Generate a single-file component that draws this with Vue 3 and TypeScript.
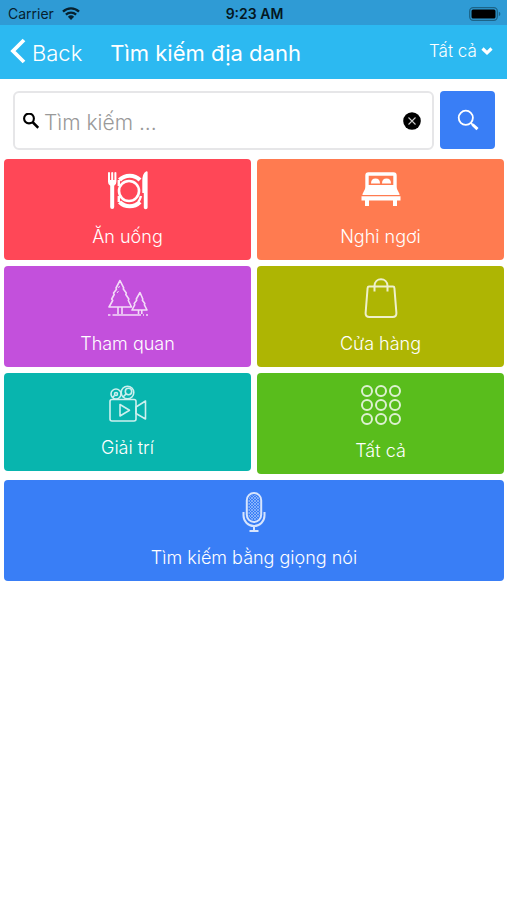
<script setup lang="ts">
import { ref } from 'vue'

interface Category {
  id: string
  label: string
  color: string
}

const categories: Category[] = [
  { id: 'food', label: 'Ăn uống', color: '#ff4757' },
  { id: 'rest', label: 'Nghỉ ngơi', color: '#ff7b50' },
  { id: 'visit', label: 'Tham quan', color: '#c350dc' },
  { id: 'shop', label: 'Cửa hàng', color: '#aeb503' },
  { id: 'fun', label: 'Giải trí', color: '#08b5ae' },
  { id: 'all', label: 'Tất cả', color: '#59bd1c' },
  { id: 'voice', label: 'Tìm kiếm bằng giọng nói', color: '#397ef6' },
]

const dots = [6, 20, 34]
const query = ref('')
const filter = ref('all')
</script>

<template>
  <div class="screen">
    <div class="status">
      <div class="carrier">
        <span>Carrier</span>
        <svg class="wifi" viewBox="0 0 18 13" aria-hidden="true">
          <path d="M1 4.6a11.5 11.5 0 0 1 16 0M3.9 7.6a7.4 7.4 0 0 1 10.2 0" fill="none" stroke="currentColor" stroke-width="2.3" />
          <path d="M9 13 5.9 9.8a4.5 4.5 0 0 1 6.2 0z" fill="currentColor" />
        </svg>
      </div>
      <span class="time">9:23 AM</span>
      <svg class="battery" viewBox="0 0 32 14" aria-hidden="true">
        <rect x=".7" y=".7" width="27.6" height="12.6" rx="3.5" fill="none" stroke="#1c6488" stroke-width="1.3" />
        <rect x="2.5" y="2.5" width="24" height="9" rx="1.5" fill="#000" />
        <path d="M29.8 4.8q1.6.6 1.6 2.2t-1.6 2.2z" fill="#1c6488" />
      </svg>
    </div>

    <header class="nav">
      <button class="back" type="button">
        <svg viewBox="0 0 16 26" aria-hidden="true">
          <path d="M14 2 3 13l11 11" fill="none" stroke="currentColor" stroke-width="3.8" />
        </svg>
        <span>Back</span>
      </button>
      <h1>Tìm kiếm địa danh</h1>
      <div class="filter">
        <select v-model="filter" aria-label="Danh mục">
          <option value="all">Tất cả</option>
        </select>
        <svg viewBox="0 0 12 8" aria-hidden="true">
          <path d="m1.5 1.5 4.5 4.3 4.5-4.3" fill="none" stroke="currentColor" stroke-width="3.2" />
        </svg>
      </div>
    </header>

    <main>
      <form class="search" @submit.prevent>
        <div class="field">
          <svg class="lens" viewBox="0 0 16 16" aria-hidden="true">
            <circle cx="6" cy="5.500" r="4.900" fill="none" stroke="#000" stroke-width="2.1" />
            <path d="m9.500 9 5.800 5.800" stroke="#000" stroke-width="2.5" />
          </svg>
          <input v-model="query" type="text" placeholder="Tìm kiếm ..." aria-label="Tìm kiếm" />
          <button class="clear" type="button" aria-label="Xóa" @click="query = ''">
            <svg viewBox="0 0 18 18" aria-hidden="true">
              <circle cx="9" cy="9" r="8.8" fill="#000" />
              <path d="m5.5 5.5 7 7m0-7-7 7" stroke="#ccc" stroke-width="1.1" />
            </svg>
          </button>
        </div>
        <button class="go" type="submit" aria-label="Tìm">
          <svg viewBox="0 0 22 22" aria-hidden="true">
            <circle cx="8.8" cy="8.8" r="7.1" fill="none" stroke="#fff" stroke-width="1.8" />
            <path d="m13.8 13.8 2 2" stroke="#fff" stroke-width="1.8" />
            <path d="m15.5 15.5 5 4.7" stroke="#fff" stroke-width="3" />
          </svg>
        </button>
      </form>

      <div class="tiles">
        <button
          v-for="item in categories"
          :key="item.id"
          type="button"
          class="tile"
          :class="item.id"
          :style="{ backgroundColor: item.color }"
        >
          <svg v-if="item.id === 'food'" class="icon" viewBox="0 0 40 40" aria-hidden="true">
            <circle cx="21" cy="20" r="10" fill="none" stroke="#fff" stroke-width="2.6" />
            <g fill="none" stroke="#fff" stroke-width="4.2">
              <path d="M11.5 9a14.5 14.5 0 0 1 20.5 0" />
              <path d="M11.5 31a14.5 14.5 0 0 0 20.5 0" />
              <path d="M10.8 9v6M10.8 25v6M33 25q-1 3.500-2.500 5.500" stroke-width="2.4" />
            </g>
            <path d="M0 1.5q1-1.200 2 0V9h1.200V1.500q1-1.200 2 0V9h1.200V1.500q1-1.200 2 0v9.300q0 3-2.200 4V36q0 2-2 2t-2-2V14.800q-2.200-1-2.200-4z" fill="#fff" />
            <path d="M39.6 1v35.500q0 1.700-1.900 1.700t-1.900-1.700V22h-1.500V10q0-7.500 3.700-9.500 1.300-.5 1.600.5z" fill="#fff" />
          </svg>

          <svg v-else-if="item.id === 'rest'" class="icon" viewBox="0 0 40 40" aria-hidden="true">
            <path d="M6 20V4.500Q6 3 7.500 3h25Q34 3 34 4.500V20" fill="none" stroke="#fff" stroke-width="3.4" />
            <path d="M10 12.500q0-5 4.500-5t4.500 5zm11 0q0-5 4.500-5t4.500 5z" fill="#fff" />
            <path d="M6 14h28l4.500 9v1h-37v-1z" fill="#fff" />
            <path d="M.5 25.200h39V29.500H.5zM4 28.500h4V35H4zM32 28.500h4V35h-4z" fill="#fff" />
          </svg>

          <svg v-else-if="item.id === 'visit'" class="icon line" viewBox="0 0 40 40" aria-hidden="true">
            <path d="M12 2.500 8 10l.5 1.200L5.500 15l.7 1.500L3.700 21l1 1.500L1 29h22.500l-3.200-6.500.5-1.500-3-4.500.5-1.500-3-4 .4-1.200zM10 29v7m4-7v7" />
            <path d="m32 14.500-3.700 6.500.4 1.200-2.500 3.300.5 1.300-2.700 5.200h15l-2.600-5.200.4-1.300-2.400-3.300.4-1.200zM30.500 32v4m3.300-4v4M0 37h2.500m2 0H33m2 0h1m2 0h2" />
            <path d="m11.500 8-1 2m0 3-1.500 2" stroke-width="1" />
          </svg>

          <svg v-else-if="item.id === 'shop'" class="icon line bold" viewBox="0 0 40 40" aria-hidden="true">
            <path d="M8 8.500h24q1.300 0 1.400 1.500l2 25q.2 4-3.800 4H8.400q-4 0-3.800-4l2-25Q6.700 8.500 8 8.500z" />
            <path d="M13.500 13.500V8C13.500-1 26.500-1 26.500 8v5.500" />
          </svg>

          <svg v-else-if="item.id === 'fun'" class="icon line" viewBox="0 0 40 37" aria-hidden="true">
            <rect x="2" y="14.5" width="26" height="21.5" rx="2" />
            <path d="m28 22 9.500-6v18L28 28.500zM12 19.500v11.500l9.500-5.700z" />
            <circle cx="8" cy="9" r="5" />
            <circle cx="19.5" cy="7.5" r="6.3" />
            <circle cx="8" cy="9" r="1.5" />
            <circle cx="20.5" cy="6.5" r="3.2" />
            <path d="m4.500 12.500 2-2M15 12l3-3" />
          </svg>

          <svg v-else-if="item.id === 'all'" class="icon line bold" viewBox="0 0 40 40" aria-hidden="true">
            <template v-for="y in dots" :key="y">
              <circle v-for="x in dots" :key="x" :cx="x" :cy="y" r="5" />
            </template>
          </svg>

          <svg v-else class="icon line bold" viewBox="0 0 40 40" aria-hidden="true">
            <defs>
              <pattern id="mesh" width="3" height="3" patternUnits="userSpaceOnUse">
                <path d="m0 0 3 3m0-3-3 3" stroke="#cfe0ff" stroke-width=".6" />
              </pattern>
            </defs>
            <rect x="12.8" y="1" width="14.4" height="29" rx="7.2" />
            <rect x="14.5" y="3" width="11" height="25" rx="5.5" fill="url(#mesh)" stroke="none" />
            <path d="M9.500 20v3.500a10.500 10.500 0 0 0 21 0V20M20 34v5M15.500 39h9" />
          </svg>
          <span>{{ item.label }}</span>
        </button>
      </div>
    </main>
  </div>
</template>

<style>
body {
  margin: 0;
  background: #fff;
}
</style>

<style scoped>
.screen {
  font-family: Inter, "Noto Sans", sans-serif;
  font-weight: 300;
}

button,
input,
select {
  font: inherit;
  color: inherit;
  border: 0;
  padding: 0;
  margin: 0;
  background: none;
}

svg {
  display: block;
  flex: none;
}

.status {
  display: grid;
  grid-template-columns: 1fr auto 1fr;
  align-items: center;
  height: 25px;
  padding: 2px 6px 0 8px;
  box-sizing: border-box;
  background: #2f9bd5;
  color: #07212f;
  font-size: 14px;
  font-weight: 400;
}

.carrier {
  display: flex;
  align-items: center;
  gap: 8px;
}

.wifi {
  width: 18px;
  height: 13px;
}

.time {
  font-weight: 600;
  color: #041722;
}

.battery {
  width: 32px;
  height: 14px;
  justify-self: end;
}

.nav {
  display: flex;
  align-items: center;
  height: 54px;
  padding: 2px 14px 0 10px;
  box-sizing: border-box;
  background: #2cb9f1;
  color: #fff;
}

.back {
  display: flex;
  align-items: center;
  gap: 6px;
  font-size: 22px;
}

.back svg {
  width: 16px;
  height: 26px;
  margin-bottom: 4px;
}

h1 {
  flex: 1;
  margin: 0 0 0 28px;
  font-size: 22px;
  font-weight: 400;
  white-space: nowrap;
}

.filter {
  display: flex;
  align-items: center;
  gap: 4px;
  padding-bottom: 4px;
  font-size: 17px;
}

.filter select {
  appearance: none;
}

.filter svg {
  width: 12px;
  height: 8px;
}

.search {
  display: flex;
  gap: 6px;
  padding: 12px 12px 9px 13px;
}

.field {
  flex: 1;
  min-width: 0;
  display: flex;
  align-items: center;
  height: 59px;
  padding: 0 11px 0 8px;
  box-sizing: border-box;
  border: 2px solid #e6e6e8;
  border-radius: 6px;
}

.lens {
  width: 16px;
  height: 16px;
}

.field input {
  flex: 1;
  min-width: 0;
  padding: 4px 0 0 5px;
  font-size: 21px;
  color: #333;
  outline: none;
}

.field input::placeholder {
  color: #999;
  opacity: 1;
}

.clear svg {
  width: 18px;
  height: 18px;
}

.go {
  display: grid;
  place-items: center;
  width: 55px;
  height: 58px;
  border-radius: 4px;
  background: #397ef6;
}

.go svg {
  width: 22px;
  height: 22px;
}

.tiles {
  display: grid;
  grid-template-columns: 1fr 1fr;
  align-items: start;
  gap: 6px;
  padding: 0 3px 0 4px;
}

.tile {
  display: flex;
  flex-direction: column;
  align-items: center;
  gap: 14px;
  padding: 12px 8px 11px;
  border-radius: 4px;
  color: #fff;
  font-size: 18px;
  line-height: 24px;
}

.icon {
  width: 40px;
  height: 40px;
}

.fun .icon {
  height: 37px;
}

.line {
  fill: none;
  stroke: currentColor;
  stroke-width: 1.6;
  stroke-linejoin: round;
  opacity: 0.8;
}

.bold {
  stroke-width: 2;
}

.voice {
  grid-column: 1 / -1;
}
</style>
